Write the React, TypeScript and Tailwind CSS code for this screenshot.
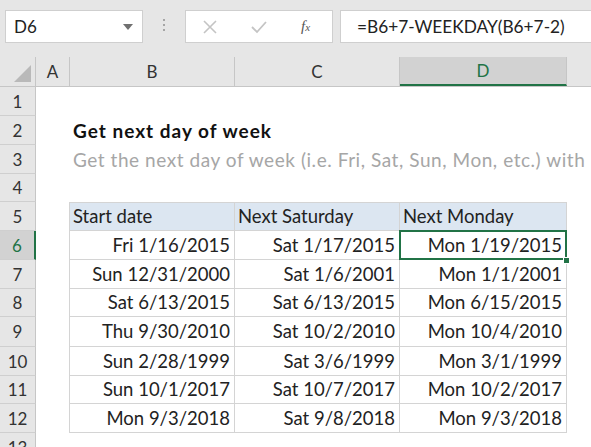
import React from "react";

type Row = {
  n: number;
  h: string;
  title?: string;
  sub?: string;
  header?: boolean;
  cells?: [string, string, string];
};

const rows: Row[] = [
  { n: 1, h: "h-[29px]" },
  { n: 2, h: "h-[29px]", title: "Get next day of week" },
  { n: 3, h: "h-[29px]", sub: "Get the next day of week (i.e. Fri, Sat, Sun, Mon, etc.) with" },
  { n: 4, h: "h-[28px]" },
  { n: 5, h: "h-[29px]", header: true, cells: ["Start date", "Next Saturday", "Next Monday"] },
  { n: 6, h: "h-[29px]", cells: ["Fri 1/16/2015", "Sat 1/17/2015", "Mon 1/19/2015"] },
  { n: 7, h: "h-[29px]", cells: ["Sun 12/31/2000", "Sat 1/6/2001", "Mon 1/1/2001"] },
  { n: 8, h: "h-[28px]", cells: ["Sat 6/13/2015", "Sat 6/13/2015", "Mon 6/15/2015"] },
  { n: 9, h: "h-[30px]", cells: ["Thu 9/30/2010", "Sat 10/2/2010", "Mon 10/4/2010"] },
  { n: 10, h: "h-[29px]", cells: ["Sun 2/28/1999", "Sat 3/6/1999", "Mon 3/1/1999"] },
  { n: 11, h: "h-[28px]", cells: ["Sun 10/1/2017", "Sat 10/7/2017", "Mon 10/2/2017"] },
  { n: 12, h: "h-[29px]", cells: ["Mon 9/3/2018", "Sat 9/8/2018", "Mon 9/3/2018"] },
  { n: 13, h: "h-[29px]" },
];

const FormulaBar = () => (
  <div className="h-[57px] bg-[#e6e6e6] flex items-start pt-[10px]">
    {/* Name box */}
    <div className="ml-[5px] w-[138px] h-[33px] bg-white border border-[#cfcfcf] flex items-center justify-between pl-[8px] pr-[9px]">
      <span className="text-[17px] text-[#222]">D6</span>
      <svg width="10" height="6" viewBox="0 0 10 6">
        <polygon points="0,0 10,0 5,6" fill="#707070" />
      </svg>
    </div>
    {/* Splitter dots */}
    <div className="ml-[20px] mt-[9px] flex flex-col gap-[3px]">
      <span className="w-[2px] h-[2px] bg-[#a5a5a5]" />
      <span className="w-[2px] h-[2px] bg-[#a5a5a5]" />
      <span className="w-[2px] h-[2px] bg-[#a5a5a5]" />
    </div>
    {/* Cancel / enter / fx */}
    <div className="ml-[20px] w-[148px] h-[33px] bg-white border border-[#cfcfcf] flex items-center">
      <svg className="ml-[17px]" width="14" height="14" viewBox="0 0 14 14">
        <path d="M1 1 L13 13 M13 1 L1 13" stroke="#c4c4c4" strokeWidth="1.6" fill="none" />
      </svg>
      <svg className="ml-[34px]" width="16" height="14" viewBox="0 0 16 14">
        <path d="M1 7 L6 12 L15 2" stroke="#c4c4c4" strokeWidth="1.8" fill="none" />
      </svg>
      <span className="ml-[34px] font-['Liberation_Serif'] italic text-[15px] text-[#555]">
        f<span className="text-[11px]">x</span>
      </span>
    </div>
    {/* Formula input */}
    <div className="ml-[7px] flex-1 h-[33px] bg-white border border-[#cfcfcf] border-r-0 flex items-center pl-[16px]">
      <span className="text-[17.3px] text-[#222] whitespace-nowrap">=B6+7-WEEKDAY(B6+7-2)</span>
    </div>
  </div>
);

const ColumnHeaders = () => (
  <div className="h-[30px] flex bg-[#e6e6e6] border-b border-[#c6c6c6] text-[17px] text-[#333]">
    <div className="w-[36px] border-r border-[#c6c6c6] flex items-end justify-end pr-[4px] pb-[4px]">
      <svg width="17" height="17" viewBox="0 0 17 17">
        <polygon points="17,0 17,17 0,17" fill="#b9b9b9" />
      </svg>
    </div>
    <div className="w-[34px] border-r border-[#c6c6c6] flex items-center justify-center">A</div>
    <div className="w-[165px] border-r border-[#c6c6c6] flex items-center justify-center">B</div>
    <div className="w-[165px] border-r border-[#c6c6c6] flex items-center justify-center">C</div>
    <div className="w-[167px] bg-[#d2d2d2] border-r border-[#c6c6c6] border-b-2 border-b-[#217346] text-[#217346] flex items-center justify-center">
      D
    </div>
    <div className="flex-1" />
  </div>
);

const BodyRow = ({ row }: { row: Row }) => {
  const active = row.n === 6;
  const inTable = !!row.cells;
  const cellBorder = inTable ? "border-r border-b border-[#d4d4d4]" : "";
  const align = row.header ? "justify-start pl-[3px]" : "justify-end pr-[4px]";
  return (
    <div className={`${row.h} flex text-[18.5px]`}>
      <div
        className={
          active
            ? "w-[36px] shrink-0 bg-[#d2d2d2] border-r-2 border-[#217346] border-b border-b-[#cfcfcf] text-[#217346] text-[17px] flex items-center justify-center"
            : "w-[36px] shrink-0 bg-[#e6e6e6] border-r border-[#c6c6c6] border-b border-b-[#cfcfcf] text-[#333] text-[17px] flex items-center justify-center"
        }
      >
        {row.n}
      </div>
      <div className={`w-[34px] shrink-0 ${inTable ? "border-r border-[#d4d4d4]" : ""}`} />
      {inTable ? (
        <>
          <div className={`w-[165px] shrink-0 ${cellBorder} ${row.header ? "bg-[#dce6f1]" : ""} flex items-center ${align} text-[#222] ${row.n === 5 ? "border-t" : ""}`}>
            {row.cells![0]}
          </div>
          <div className={`w-[165px] shrink-0 ${cellBorder} ${row.header ? "bg-[#dce6f1]" : ""} flex items-center ${align} text-[#222] ${row.n === 5 ? "border-t" : ""}`}>
            {row.cells![1]}
          </div>
          <div className={`relative w-[167px] shrink-0 ${cellBorder} ${row.header ? "bg-[#dce6f1]" : ""} flex items-center ${align} text-[#222] ${row.n === 5 ? "border-t" : ""}`}>
            {row.cells![2]}
            {active && (
              <>
                <div className="absolute -left-[1px] -top-[1px] -right-[1px] -bottom-[1px] border-2 border-[#217346]" />
                <div className="absolute z-10 -right-[4px] -bottom-[5px] w-[7px] h-[7px] bg-[#217346] border border-white" />
              </>
            )}
          </div>
        </>
      ) : (
        <div className="flex-1 flex items-center pl-[3px] whitespace-nowrap overflow-visible">
          {row.title && <span className="font-bold text-[19px] tracking-[1px] text-[#111]">{row.title}</span>}
          {row.sub && <span className="text-[19px] tracking-[0.55px] text-[#a6a6a6]">{row.sub}</span>}
        </div>
      )}
    </div>
  );
};

export default function App() {
  return (
    <div className="w-[591px] h-[447px] overflow-hidden bg-white font-['Lato'] leading-none">
      <FormulaBar />
      <ColumnHeaders />
      <div>
        {rows.map((r) => (
          <BodyRow key={r.n} row={r} />
        ))}
      </div>
    </div>
  );
}
